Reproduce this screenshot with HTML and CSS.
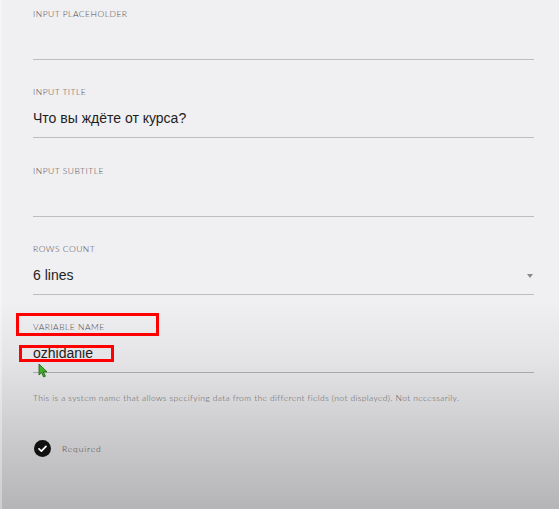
FILE: index.html
```html
<!DOCTYPE html>
<html>
<head>
<meta charset="utf-8">
<link rel="stylesheet" href="styles.css">
</head>
<body>
<div class="page">
  <div class="form">
    <div class="field">
      <div class="label">Input placeholder</div>
      <div class="value"></div>
    </div>
    <div class="field">
      <div class="label">Input title</div>
      <div class="value">Что вы ждёте от курса?</div>
    </div>
    <div class="field">
      <div class="label">Input subtitle</div>
      <div class="value"></div>
    </div>
    <div class="field">
      <div class="label">Rows count</div>
      <div class="value select">6 lines<span class="arrow"></span></div>
    </div>
    <div class="field last">
      <div class="label">Variable name</div>
      <div class="value">ozhidanie</div>
      <span class="mark mark-label"></span>
      <span class="mark mark-value"></span>
      <svg class="cursor" width="11" height="15" viewBox="0 0 11 15"><path d="M1 1 L1 12 L3.6 9.6 L5.6 14 L7.4 13.2 L5.4 8.8 L9 8.8 Z" fill="#3fae2a" stroke="#1d5e12" stroke-width="0.8" stroke-linejoin="round"/></svg>
    </div>
    <div class="help">This is a system name that allows specifying data from the different fields (not displayed). Not necessarily.</div>
    <div class="check">
      <span class="circle"><svg width="17" height="17" viewBox="0 0 17 17"><circle cx="8.5" cy="8.5" r="8.5" fill="#111"/><path d="M5 8.8 L7.4 11.1 L12 6.3" fill="none" stroke="#fff" stroke-width="1.7" stroke-linecap="round" stroke-linejoin="round"/></svg></span>
      <span class="check-text">Required</span>
    </div>
  </div>
</div>
</body>
</html>
```
FILE: styles.css
```css
html, body {
  margin: 0;
  padding: 0;
}
body {
  width: 559px;
  height: 509px;
  overflow: hidden;
  background: linear-gradient(to bottom, #f0eff1 0px, #f0eff1 300px, #e4e3e5 360px, #cdccce 430px, #b5b4b6 509px);
}
.page {
  height: 509px;
  border-left: 2px solid rgba(255,255,255,0.35);
  box-sizing: border-box;
}
.form {
  padding: 8px 0 0 31px;
  width: 501px;
}
.field {
  position: relative;
  margin-bottom: 26.3px;
  border-bottom: 1px solid #bdbcbe;
}
.field.last {
  margin-bottom: 0;
  border-bottom-color: #a8a7a9;
}
.label {
  font-family: "Lato", "DejaVu Sans", sans-serif;
  font-weight: 300;
  font-size: 8.5px;
  line-height: 12px;
  text-transform: uppercase;
  color: #4e4d4f;
  letter-spacing: 0.5px;
}
.value {
  margin-top: 10px;
  height: 20px;
  padding-bottom: 9px;
  font-family: "Liberation Sans", Arial, sans-serif;
  font-size: 14px;
  line-height: 20px;
  color: #1e1e1e;
  position: relative;
}
.arrow {
  position: absolute;
  right: 1px;
  top: 9px;
  width: 0;
  height: 0;
  border-left: 3.5px solid transparent;
  border-right: 3.5px solid transparent;
  border-top: 4px solid #8a898b;
}
.mark {
  position: absolute;
  border: 3px solid #f00;
  box-sizing: border-box;
}
.mark-label {
  left: -17px;
  top: -8px;
  width: 143px;
  height: 23px;
}
.mark-value {
  left: -14px;
  top: 24px;
  width: 95px;
  height: 17px;
}
.cursor {
  position: absolute;
  left: 5px;
  top: 42px;
}
.help {
  margin-top: 19px;
  font-family: "Lato", "DejaVu Sans", sans-serif;
  font-weight: 300;
  font-size: 8.5px;
  line-height: 12px;
  color: #5f5e60;
  letter-spacing: 0.38px;
  white-space: nowrap;
}
.check {
  margin-top: 36px;
  display: flex;
  align-items: center;
  gap: 11px;
  padding-left: 1px;
}
.circle {
  display: block;
  width: 17px;
  height: 17px;
}
.circle svg {
  display: block;
}
.check-text {
  font-family: "Lato", "DejaVu Sans", sans-serif;
  font-weight: 300;
  font-size: 8.5px;
  letter-spacing: 0.9px;
  color: #3f3e40;
}
```
